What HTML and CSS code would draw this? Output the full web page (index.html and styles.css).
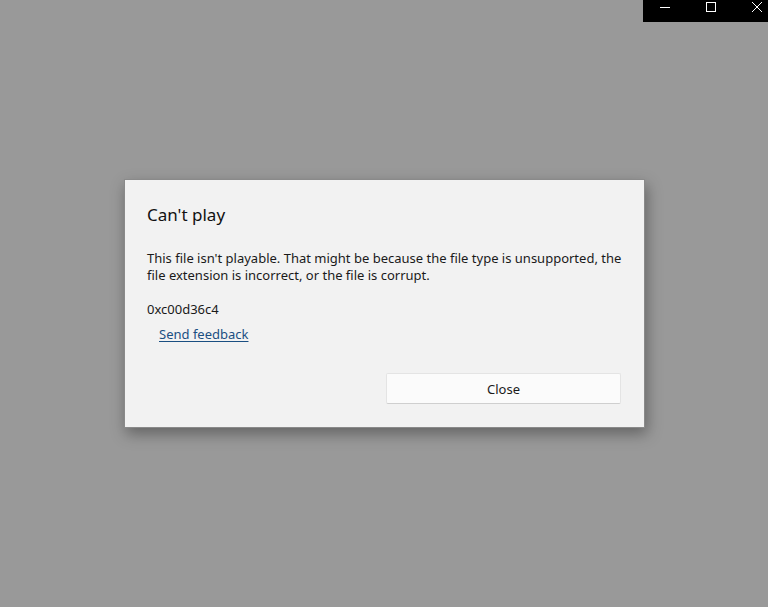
FILE: index.html
```html
<!DOCTYPE html>
<html lang="en">
<head>
<meta charset="utf-8">
<title>Can't play</title>
<link rel="stylesheet" href="styles.css">
</head>
<body>
<div class="caption">
  <div class="cap-btn">
    <svg width="46" height="22" viewBox="0 0 46 22"><path d="M18 7.5H28" stroke="#fff" stroke-width="1" fill="none"/></svg>
  </div>
  <div class="cap-btn">
    <svg width="46" height="22" viewBox="0 0 46 22"><rect x="18.5" y="2.5" width="9" height="9" stroke="#fff" stroke-width="1" fill="none"/></svg>
  </div>
  <div class="cap-btn">
    <svg width="46" height="22" viewBox="0 0 46 22"><path d="M18 2L28 12M28 2L18 12" stroke="#fff" stroke-width="1" fill="none"/></svg>
  </div>
</div>
<main class="stage">
  <section class="dialog">
    <h1 class="title">Can't play</h1>
    <p class="message">This file isn't playable. That might be because the file type is unsupported, the file extension is incorrect, or the file is corrupt.</p>
    <p class="code">0xc00d36c4</p>
    <a class="link" href="#">Send feedback</a>
    <div class="actions">
      <span></span>
      <button class="btn">Close</button>
    </div>
  </section>
</main>
</body>
</html>
```
FILE: styles.css
```css
html, body {
  margin: 0;
  padding: 0;
  height: 100%;
}
body {
  background: #999999;
  font-family: "Noto Sans", "Open Sans", sans-serif;
  color: #1a1a1a;
  overflow: hidden;
}
.caption {
  position: absolute;
  top: 0;
  right: 0;
  width: 125px;
  height: 22px;
  background: #000;
  display: flex;
  overflow: hidden;
}
.cap-btn {
  flex: 0 0 46px;
  height: 22px;
  display: flex;
}
.cap-btn:first-child {
  margin-left: -1px;
}
.stage {
  height: 607px;
  display: flex;
  align-items: center;
  justify-content: center;
}
.dialog {
  box-sizing: border-box;
  width: 521px;
  height: 249px;
  margin-left: 1px;
  background: #f2f2f2;
  border: 1px solid #8a8a8a;
  box-shadow: 2px 6px 14px rgba(0,0,0,0.35);
  padding: 23px 23px 23px 22px;
  display: flex;
  flex-direction: column;
}
.title {
  margin: 0;
  font-size: 17px;
  font-weight: 400;
  line-height: 24px;
  color: #111;
}
.message {
  margin: 23px -8px 0 0;
  font-size: 13px;
  line-height: 17px;
}
.code {
  margin: 16px 0 0;
  font-size: 13px;
  line-height: 18px;
}
.link {
  align-self: flex-start;
  margin: 7px 0 0 12px;
  font-size: 13px;
  line-height: 18px;
  color: #1b4f82;
  text-decoration: underline;
  text-underline-offset: 2px;
}
.actions {
  margin-top: auto;
  display: grid;
  grid-template-columns: 1fr 235px;
  gap: 3px;
}
.btn {
  height: 31px;
  background: #fbfbfb;
  border: 1px solid #e4e4e4;
  border-bottom-color: #cfcfcf;
  border-radius: 2px;
  font-family: inherit;
  font-size: 13px;
  color: #1a1a1a;
  padding: 0;
}
```
